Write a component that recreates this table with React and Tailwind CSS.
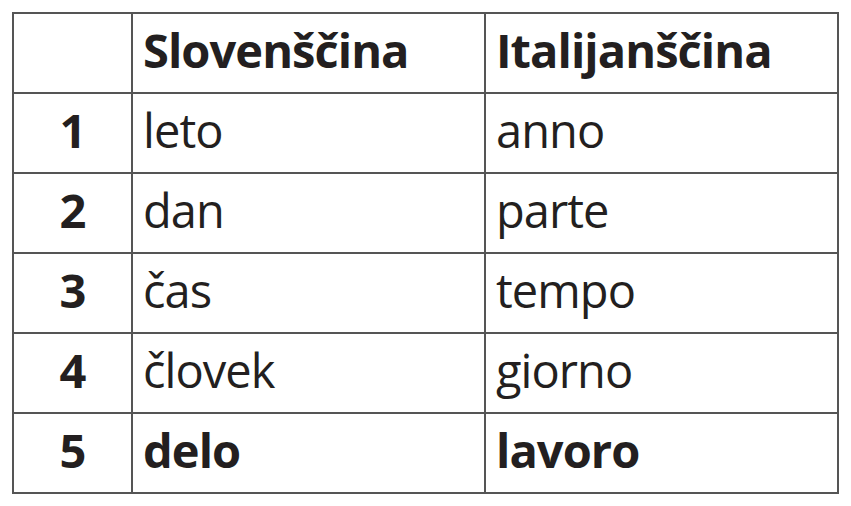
import React from 'react';

const rows = [
  { n: 1, sl: 'leto', it: 'anno' },
  { n: 2, sl: 'dan', it: 'parte' },
  { n: 3, sl: 'čas', it: 'tempo' },
  { n: 4, sl: 'človek', it: 'giorno' },
  { n: 5, sl: 'delo', it: 'lavoro', bold: true },
];

const App = () => {
  return (
    <div className="w-[851px] h-[506px] bg-white pt-[12px] pl-[12px]" style={{ fontFamily: '"Open Sans", "Noto Sans", sans-serif' }}>
      <table className="border-collapse border-2 border-[#555555] text-[#231f20] text-[47px] leading-none tracking-[-0.02em]">
        <thead>
          <tr className="h-[80px]">
            <th className="w-[119px] border-2 border-[#555555]"></th>
            <th className="w-[353px] border-2 border-[#555555] text-left pl-[10px] pb-[6px] font-bold">Slovenščina</th>
            <th className="w-[353px] border-2 border-[#555555] text-left pl-[10px] pb-[6px] font-bold">Italijanščina</th>
          </tr>
        </thead>
        <tbody>
          {rows.map(r => (
            <tr key={r.n} className="h-[80px]">
              <td className="border-2 border-[#555555] text-center pb-[6px] font-bold">{r.n}</td>
              <td className={`border-2 border-[#555555] pl-[10px] pb-[6px] ${r.bold ? 'font-bold' : 'font-normal'}`}>{r.sl}</td>
              <td className={`border-2 border-[#555555] pl-[10px] pb-[6px] ${r.bold ? 'font-bold' : 'font-normal'}`}>{r.it}</td>
            </tr>
          ))}
        </tbody>
      </table>
    </div>
  );
};

export default App;
